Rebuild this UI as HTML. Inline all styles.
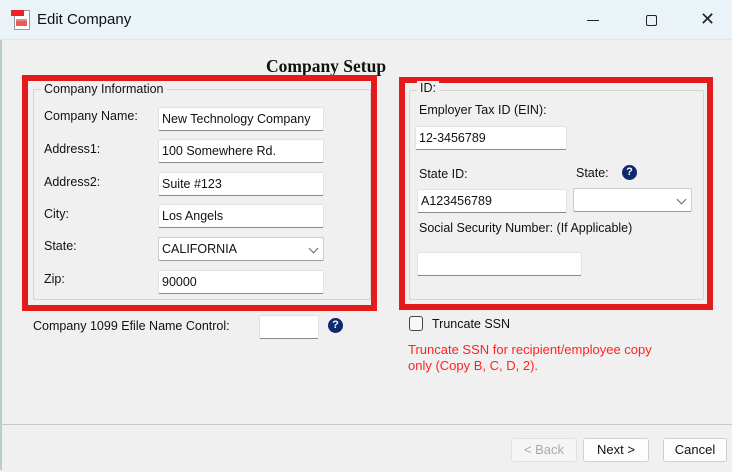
<!DOCTYPE html>
<html><head><style>
*{box-sizing:border-box;margin:0;padding:0}
body{width:732px;height:472px;background:#f0f0f0;font-family:"Liberation Sans",sans-serif;font-size:12.5px;color:#111;position:relative;overflow:hidden}
.a{position:absolute}
.tb{left:0;top:0;width:732px;height:40px;background:#eaf4f8;border-bottom:1px solid #e0e6ea}
.in{position:absolute;background:#fff;border:1px solid #e2e2e2;border-bottom:1px solid #8a8a8a;border-radius:2px;height:24px;padding:4px 3px;font-size:12.5px;white-space:nowrap}
.red{position:absolute;border:6px solid #e41b1b}
.fs{position:absolute;border:1px solid #d5d5d5;border-radius:2px}
.lg{position:absolute;background:#f0f0f0;padding:0 3px}
.q{position:absolute;width:15px;height:15px;border-radius:50%;background:#0d2a6e;color:#fff;font-weight:bold;font-size:11px;text-align:center;line-height:15px}
.btn{position:absolute;height:24px;border:1px solid #cfcfcf;border-radius:3px;background:#fdfdfd;text-align:center;line-height:22px;font-size:13px}
.chev{position:absolute;right:6px;top:7px;width:7px;height:7px;border-right:1px solid #666;border-bottom:1px solid #666;transform:rotate(45deg)}
</style></head><body>
<div class="a tb"></div>
<div class="a" style="left:14px;top:10px;width:16px;height:20px;background:#fff;border:1px solid #999"></div>
<div class="a" style="left:11px;top:10px;width:13px;height:6px;background:#e22"></div>
<div class="a" style="left:16px;top:19px;width:11px;height:7px;background:#ee5a5a;border-top:2px solid #e88"></div>
<div class="a" style="left:37px;top:11px;font-size:15px;">Edit Company</div>
<div class="a" style="left:587px;top:20px;width:12px;height:1px;background:#222"></div>
<div class="a" style="left:646px;top:15px;width:11px;height:11px;border:1px solid #222;border-radius:2px"></div>
<div class="a" style="left:700px;top:9px;font-size:18px;color:#222">✕</div>

<div class="a" style="left:266px;top:56px;font-family:'Liberation Serif',serif;font-weight:bold;font-size:17.5px">Company Setup</div>

<div class="red" style="left:22px;top:75px;width:355px;height:236px"></div>
<div class="fs" style="left:33px;top:89px;width:338px;height:211px"></div>
<div class="lg" style="left:41px;top:82px">Company Information</div>
<div class="a" style="left:44px;top:109px">Company Name:</div>
<div class="a" style="left:44px;top:142px">Address1:</div>
<div class="a" style="left:44px;top:175px">Address2:</div>
<div class="a" style="left:44px;top:207px">City:</div>
<div class="a" style="left:44px;top:239px">State:</div>
<div class="a" style="left:44px;top:272px">Zip:</div>
<div class="in" style="left:158px;top:107px;width:166px">New Technology Company</div>
<div class="in" style="left:158px;top:139px;width:166px">100 Somewhere Rd.</div>
<div class="in" style="left:158px;top:172px;width:166px">Suite #123</div>
<div class="in" style="left:158px;top:204px;width:166px">Los Angels</div>
<div class="in" style="left:158px;top:237px;width:166px;border:1px solid #ccc;border-bottom:1px solid #999">CALIFORNIA<span class="chev"></span></div>
<div class="in" style="left:158px;top:270px;width:166px">90000</div>

<div class="red" style="left:399px;top:77px;width:314px;height:233px"></div>
<div class="fs" style="left:409px;top:90px;width:295px;height:210px"></div>
<div class="lg" style="left:417px;top:81px">ID:</div>
<div class="a" style="left:419px;top:103px">Employer Tax ID (EIN):</div>
<div class="in" style="left:415px;top:126px;width:152px">12-3456789</div>
<div class="a" style="left:419px;top:167px">State ID:</div>
<div class="a" style="left:576px;top:166px">State:</div>
<div class="q" style="left:622px;top:165px">?</div>
<div class="in" style="left:417px;top:189px;width:150px">A123456789</div>
<div class="in" style="left:573px;top:188px;width:119px;border:1px solid #ccc;border-bottom:1px solid #999"><span class="chev"></span></div>
<div class="a" style="left:419px;top:221px">Social Security Number: (If Applicable)</div>
<div class="in" style="left:417px;top:252px;width:165px"></div>

<div class="a" style="left:33px;top:319px">Company 1099 Efile Name Control:</div>
<div class="in" style="left:259px;top:315px;width:60px"></div>
<div class="q" style="left:328px;top:318px">?</div>
<div class="a" style="left:409px;top:316px;width:14px;height:15px;border:1px solid #444;border-radius:3px;background:#f8f8f8"></div>
<div class="a" style="left:432px;top:317px">Truncate SSN</div>
<div class="a" style="left:408px;top:342px;color:#f22;line-height:16px;font-size:13px">Truncate SSN for recipient/employee copy<br>only (Copy B, C, D, 2).</div>

<div class="a" style="left:0;top:424px;width:732px;height:1px;background:#c8c8c8"></div>
<div class="a" style="left:0;top:425px;width:732px;height:47px;background:#f0f0f0"></div>
<div class="btn" style="left:511px;top:438px;width:66px;color:#aaa;border-color:#e0e0e0;background:#f5f5f5">&lt; Back</div>
<div class="btn" style="left:583px;top:438px;width:66px">Next &gt;</div>
<div class="btn" style="left:663px;top:438px;width:64px">Cancel</div>
<div class="a" style="left:0;top:40px;width:2px;height:430px;background:#bcc"></div>
</body></html>
